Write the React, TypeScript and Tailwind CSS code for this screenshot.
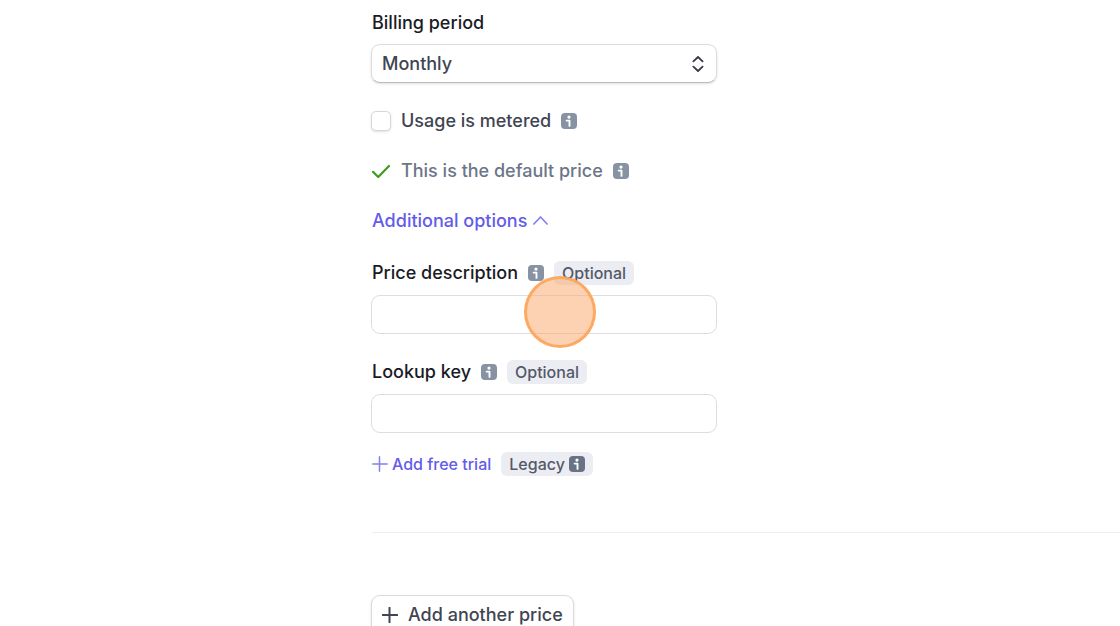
import React, { useState } from 'react';

interface InfoIconProps {
  label: string;
  className?: string;
}

const InfoIcon: React.FC<InfoIconProps> = ({ label, className = 'text-[#8792a2]' }) => (
  <svg viewBox="0 0 16 16" role="img" aria-label={label} className={`size-4 shrink-0 ${className}`}>
    <rect width="16" height="16" rx="4" fill="currentColor" />
    <circle cx="8" cy="4.1" r="1.6" fill="#fff" />
    <path d="M5.6 7.6h2.900v5.300" fill="none" stroke="#fff" strokeWidth="1.9" strokeLinecap="round" strokeLinejoin="round" />
  </svg>
);

const PlusIcon: React.FC<{ className?: string }> = ({ className = '' }) => (
  <svg viewBox="0 0 16 16" aria-hidden="true" className={`size-4 shrink-0 ${className}`} fill="none" stroke="currentColor" strokeLinecap="round">
    <path d="M7.5 .8v14.400M.8 8h14.400" />
  </svg>
);

const Badge: React.FC<{ children: React.ReactNode }> = ({ children }) => (
  <span className="flex h-6 items-center gap-1 rounded-md bg-[#ebedf2] px-2 text-base font-medium text-[#545969]">
    {children}
  </span>
);

interface TextFieldProps {
  id: string;
  label: string;
  children?: React.ReactNode;
}

const TextField: React.FC<TextFieldProps> = ({ id, label, children }) => (
  <div className="mt-6">
    <div className="flex h-7 items-center gap-2.5">
      <label htmlFor={id} className="pl-px font-medium text-[#1a1b25]">{label}</label>
      <InfoIcon label={`About ${label.toLowerCase()}`} />
      <Badge>Optional</Badge>
    </div>
    <div className="relative mt-2">
      <input id={id} type="text" className="block h-[39px] w-full rounded-[9px] border border-[#dcdde1] bg-white px-3 outline-none" />
      {children}
    </div>
  </div>
);

const App: React.FC = () => {
  const [metered, setMetered] = useState(false);
  const [open, setOpen] = useState(true);

  return (
    <main className="h-screen overflow-hidden bg-white pt-[9px] pl-[371px] font-['Inter',sans-serif] text-lg leading-7 text-[#414552]">
      <form className="w-full max-w-[346px]" onSubmit={(e) => e.preventDefault()}>
        <label htmlFor="period" className="block pl-px font-medium text-[#1a1b25]">Billing period</label>
        <div className="relative mt-[7px]">
          <select id="period" className="block h-[39px] w-full appearance-none rounded-[9px] border border-[#dcdde1] border-b-[#b9bcc2] bg-white px-2.5 font-medium shadow-sm outline-none">
            <option>Monthly</option>
            <option>Yearly</option>
          </select>
          <svg viewBox="0 0 12 18" aria-hidden="true" className="pointer-events-none absolute top-[11px] right-[13px] h-[18px] w-3" fill="none" stroke="#353a44" strokeWidth="1.8" strokeLinecap="round" strokeLinejoin="round">
            <path d="M1.400 6.300 6 2l4.600 4.300M1.400 11.700 6 16l4.600-4.300" />
          </svg>
        </div>

        <div className="mt-6 flex h-7 items-center gap-2.5">
          <input
            id="metered"
            type="checkbox"
            checked={metered}
            onChange={(e) => setMetered(e.target.checked)}
            className="size-5 shrink-0 appearance-none rounded-[5px] border border-[#d5d8dd] bg-white shadow-sm checked:bg-[#625afa]"
          />
          <label htmlFor="metered" className="font-medium">Usage is metered</label>
          <InfoIcon label="About metered usage" />
        </div>

        <div className="mt-[22px] flex h-7 items-center gap-2.5 text-[#6c7688]">
          <svg viewBox="0 0 20 16" aria-hidden="true" className="h-4 w-5 shrink-0" fill="none" stroke="#3f9b1d" strokeWidth="2.2" strokeLinecap="round" strokeLinejoin="round">
            <path d="M2 8.800 7.200 14 18 3" />
          </svg>
          <span className="font-medium">This is the default price</span>
          <InfoIcon label="About the default price" />
        </div>

        <button type="button" aria-expanded={open} onClick={() => setOpen(!open)} className="mt-[22px] flex h-7 items-center gap-1.5 pl-px font-medium text-[#635bea]">
          Additional options
          <svg viewBox="0 0 16 10" aria-hidden="true" className={`h-2.5 w-4 ${open ? '' : 'rotate-180'}`} fill="none" stroke="#857ff0" strokeWidth="1.7" strokeLinecap="round" strokeLinejoin="round">
            <path d="M.9 8 7.500 1l6.600 7" />
          </svg>
        </button>

        {open && (
          <>
            <TextField id="description" label="Price description">
              <span className="pointer-events-none absolute -top-[19px] left-[153px] size-[72px] rounded-full border-3 border-[#ffa55a]/90 bg-[#fca667]/50" />
            </TextField>
            <TextField id="lookup" label="Lookup key" />
          </>
        )}

        <div className="mt-[17px] flex h-7 items-center gap-2.5">
          <button type="button" className="flex items-center gap-1 pl-px text-base font-medium text-[#635bea]">
            <PlusIcon className="stroke-[1.5] text-[#857ff0]" />
            Add free trial
          </button>
          <Badge>
            Legacy
            <InfoIcon label="About legacy trials" className="text-[#687385]" />
          </Badge>
        </div>
      </form>

      <hr className="mt-[54px] ml-px border-[#ebeef1]" />

      <button type="button" className="mt-[62px] flex h-[39px] items-center gap-2.5 rounded-[9px] border border-[#d8dbdf] border-b-[#b9bcc2] bg-white px-2.5 font-medium shadow-sm">
        <PlusIcon className="stroke-2" />
        Add another price
      </button>
    </main>
  );
};

export default App;
